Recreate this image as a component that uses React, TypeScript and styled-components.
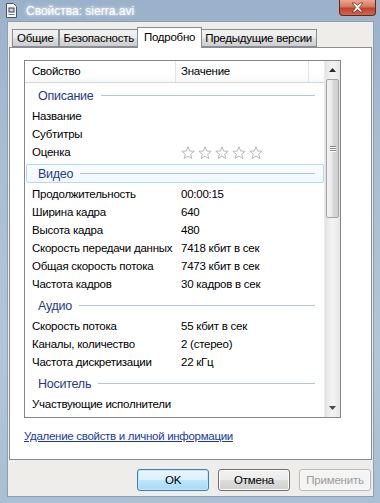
import styled, { createGlobalStyle } from "styled-components";

const GlobalStyle = createGlobalStyle`
  html, body {
    margin: 0;
    padding: 0;
    background: #ffffff;
  }
  body {
    font-family: "Liberation Sans", Arial, sans-serif;
    font-size: 11.5px;
    letter-spacing: -0.25px;
    color: #000;
  }
`;

const Window = styled.div`
  width: 380px;
  height: 503px;
  display: flex;
  flex-direction: column;
  overflow: hidden;
  background: linear-gradient(180deg, #9bb1ca 0%, #a9bdd2 30%, #b3c5d8 70%, #aabfd4 100%);
`;

const TitleBar = styled.div`
  height: 21px;
  flex: none;
  display: flex;
  align-items: center;
  padding-left: 6px;
  gap: 9px;
`;

const TitleText = styled.span`
  color: #ffffff;
  font-size: 12px;
  letter-spacing: 0;
  text-shadow: 0 0 3px rgba(255, 255, 255, 0.9), 0 0 6px rgba(210, 225, 240, 0.9);
`;

const CloseButton = styled.div`
  margin-left: auto;
  margin-right: 4px;
  align-self: flex-start;
  width: 37px;
  height: 16px;
  box-sizing: border-box;
  border: 1px solid #5b2a22;
  border-top: none;
  border-radius: 0 0 4px 4px;
  background: linear-gradient(180deg, #e9a792 0%, #d8765f 45%, #c2412a 55%, #d4664a 100%);
  display: flex;
  align-items: center;
  justify-content: center;
`;

const Body = styled.div`
  flex: 1;
  display: flex;
  padding: 0 6px 6px 7px;
  min-height: 0;
`;

const Client = styled.div`
  flex: 1;
  display: flex;
  flex-direction: column;
  background: #eeede9;
  border: 1px solid #8d9fb3;
  padding: 5px 1px 0 1px;
`;

const TabStrip = styled.div`
  height: 20px;
  display: flex;
  align-items: flex-end;
  padding-left: 3px;
  position: relative;
  z-index: 1;
`;

const Tab = styled.div<{ $active?: boolean }>`
  box-sizing: border-box;
  height: ${(p) => (p.$active ? "21px" : "18px")};
  margin: ${(p) => (p.$active ? "0 -2px -1px -2px" : "0")};
  padding: ${(p) => (p.$active ? "0 6px 2px" : "0 4px")};
  display: flex;
  align-items: center;
  border: 1px solid #898c95;
  border-bottom: ${(p) => (p.$active ? "none" : "1px solid #898c95")};
  background: ${(p) =>
    p.$active ? "#ffffff" : "linear-gradient(180deg, #f2f2f2 0%, #ebebeb 50%, #dddddd 51%, #cfcfcf 100%)"};
  position: relative;
  z-index: ${(p) => (p.$active ? 2 : 0)};
  & + & {
    border-left: ${(p) => (p.$active ? "1px solid #898c95" : "none")};
  }
`;

const Panel = styled.div`
  height: 413px;
  box-sizing: border-box;
  background: #ffffff;
  border: 1px solid #898c95;
  padding: 12px 14px 0 14px;
`;

const ListBox = styled.div`
  width: 317px;
  height: 358px;
  box-sizing: border-box;
  border: 1px solid #828790;
  display: grid;
  grid-template-columns: 1fr 16px;
  overflow: hidden;
`;

const ListContent = styled.div`
  display: flex;
  flex-direction: column;
  overflow: hidden;
`;

const Header = styled.div`
  height: 22px;
  flex: none;
  box-sizing: border-box;
  display: grid;
  grid-template-columns: 150px 133px 1fr;
  border-bottom: 1px solid #d5d5d5;
  background: linear-gradient(180deg, #ffffff 0%, #ffffff 60%, #f7f8f9 100%);
`;

const HeaderCell = styled.div<{ $first?: boolean }>`
  display: flex;
  align-items: center;
  padding-left: ${(p) => (p.$first ? "7px" : "5px")};
  border-left: ${(p) => (p.$first ? "none" : "1px solid #e3e4e6")};
  padding-bottom: 1px;
`;

const Group = styled.div`
  height: 24px;
  flex: none;
  box-sizing: border-box;
  padding: 3px 0 2px 1px;
`;

const GroupBox = styled.div<{ $hot?: boolean }>`
  height: 19px;
  box-sizing: border-box;
  display: flex;
  align-items: center;
  padding: 0 8px 0 11px;
  border: 1px solid ${(p) => (p.$hot ? "#b9d7f5" : "transparent")};
  border-radius: 2px;
  background: ${(p) => (p.$hot ? "linear-gradient(180deg, #fafdff 0%, #f1f8fe 100%)" : "transparent")};
`;

const GroupTitle = styled.span`
  color: #1e3a8a;
  font-size: 12.5px;
`;

const GroupLine = styled.div`
  flex: 1;
  height: 1px;
  margin-left: 7px;
  background: #b4c5d8;
`;

const Row = styled.div`
  height: 18px;
  flex: none;
  display: grid;
  grid-template-columns: 150px 1fr;
  align-items: center;
  white-space: nowrap;
`;

const NameCell = styled.span`
  padding-left: 7px;
`;

const ValueCell = styled.span`
  padding-left: 6px;
  display: flex;
  align-items: center;
`;

const Scrollbar = styled.div`
  display: flex;
  flex-direction: column;
  background: linear-gradient(90deg, #e3e3e3 0%, #f2f2f2 40%, #f2f2f2 60%, #e6e6e6 100%);
  border-left: 1px solid #eaeaea;
`;

const ScrollArrow = styled.div`
  height: 18px;
  flex: none;
  display: flex;
  align-items: center;
  justify-content: center;
`;

const ScrollTrack = styled.div`
  flex: 1;
  padding: 0 1px;
`;

const Thumb = styled.div`
  height: 139px;
  box-sizing: border-box;
  border: 1px solid #a4a4a4;
  border-radius: 2px;
  background: linear-gradient(90deg, #f3f3f3 0%, #e8e8e8 45%, #d9d9d9 55%, #cfcfcf 100%);
  display: flex;
  flex-direction: column;
  align-items: center;
  justify-content: center;
  gap: 1px;
`;

const GripLine = styled.div`
  width: 6px;
  height: 1px;
  background: #8a8a8a;
  box-shadow: 0 1px 0 #ffffff;
`;

const LinkText = styled.a`
  display: block;
  margin-top: 10px;
  line-height: 16px;
  color: #1a3a9e;
  text-decoration: underline;
  letter-spacing: -0.3px;
  cursor: pointer;
`;

const ButtonRow = styled.div`
  display: flex;
  justify-content: flex-end;
  gap: 9px;
  margin-top: 9px;
  padding-right: 1px;
`;

const Button = styled.button<{ $variant?: "default" | "normal" | "disabled" }>`
  width: 72px;
  height: 22px;
  box-sizing: border-box;
  font-family: "Liberation Sans", Arial, sans-serif;
  font-size: 11.5px;
  letter-spacing: -0.2px;
  padding: 0;
  border-radius: 3px;
  border: 1px solid
    ${(p) => (p.$variant === "default" ? "#3c7fb1" : p.$variant === "disabled" ? "#b5b8bb" : "#707070")};
  color: ${(p) => (p.$variant === "disabled" ? "#9c9c9c" : "#000")};
  background: ${(p) =>
    p.$variant === "disabled"
      ? "#f4f4f4"
      : p.$variant === "default"
      ? "linear-gradient(180deg, #eaf6fd 0%, #d9f0fc 50%, #bee6fd 51%, #a7d9f5 100%)"
      : "linear-gradient(180deg, #f2f2f2 0%, #ebebeb 50%, #dddddd 51%, #cfcfcf 100%)"};
  box-shadow: ${(p) => (p.$variant === "default" ? "inset 0 0 0 1px #c6e7f8" : "inset 0 0 0 1px #fbfbfb")};
`;

const StarIcon = () => (
  <svg width="14" height="14" viewBox="0 0 14 14">
    <polygon
      points="7,0.8 8.65,5.03 13.18,5.29 9.66,8.17 10.82,12.56 7,10.1 3.18,12.56 4.34,8.17 0.82,5.29 5.35,5.03"
      fill="#ffffff"
      stroke="#b9b9b9"
      strokeWidth="1"
      strokeLinejoin="round"
    />
  </svg>
);

const Stars = styled.span`
  display: flex;
  gap: 3px;
  margin-top: 1px;
`;

const FileIcon = () => (
  <svg width="11" height="15" viewBox="0 0 11 15">
    <path d="M0.5 0.5 H7.5 L10.5 3.5 V14.5 H0.5 Z" fill="#f4f6f8" stroke="#4a5564" />
    <rect x="2.5" y="4.5" width="6" height="5" fill="#3a4452" />
    <rect x="3.5" y="5.5" width="4" height="3" fill="#c9d3de" />
    <rect x="2.5" y="11" width="6" height="1" fill="#7b8796" />
  </svg>
);

const CloseGlyph = () => (
  <svg width="13" height="11" viewBox="0 0 13 11">
    <path
      d="M1 1 H4 L6.5 3.6 L9 1 H12 L8.2 5.5 L12 10 H9 L6.5 7.4 L4 10 H1 L4.8 5.5 Z"
      fill="#ffffff"
      stroke="#6b2a1f"
      strokeWidth="0.8"
      strokeLinejoin="round"
    />
  </svg>
);

const UpArrow = () => (
  <svg width="7" height="4" viewBox="0 0 7 4">
    <polygon points="3.5,0 7,4 0,4" fill="#2b2b2b" />
  </svg>
);

const DownArrow = () => (
  <svg width="7" height="4" viewBox="0 0 7 4">
    <polygon points="0,0 7,0 3.5,4" fill="#4a4a4a" />
  </svg>
);

type Item = { name: string; value?: string; stars?: boolean };
type Section = { title: string; hot?: boolean; items: Item[] };

const sections: Section[] = [
  {
    title: "Описание",
    items: [{ name: "Название" }, { name: "Субтитры" }, { name: "Оценка", stars: true }],
  },
  {
    title: "Видео",
    hot: true,
    items: [
      { name: "Продолжительность", value: "00:00:15" },
      { name: "Ширина кадра", value: "640" },
      { name: "Высота кадра", value: "480" },
      { name: "Скорость передачи данных", value: "7418 кбит в сек" },
      { name: "Общая скорость потока", value: "7473 кбит в сек" },
      { name: "Частота кадров", value: "30 кадров в сек" },
    ],
  },
  {
    title: "Аудио",
    items: [
      { name: "Скорость потока", value: "55 кбит в сек" },
      { name: "Каналы, количество", value: "2 (стерео)" },
      { name: "Частота дискретизации", value: "22 кГц" },
    ],
  },
  {
    title: "Носитель",
    items: [{ name: "Участвующие исполнители" }],
  },
];

const tabs = ["Общие", "Безопасность", "Подробно", "Предыдущие версии"];

export default function App() {
  return (
    <>
      <GlobalStyle />
      <Window>
        <TitleBar>
          <FileIcon />
          <TitleText>Свойства: sierra.avi</TitleText>
          <CloseButton>
            <CloseGlyph />
          </CloseButton>
        </TitleBar>
        <Body>
          <Client>
            <TabStrip>
              {tabs.map((t) => (
                <Tab key={t} $active={t === "Подробно"}>
                  {t}
                </Tab>
              ))}
            </TabStrip>
            <Panel>
              <ListBox>
                <ListContent>
                  <Header>
                    <HeaderCell $first>Свойство</HeaderCell>
                    <HeaderCell>Значение</HeaderCell>
                    <HeaderCell />
                  </Header>
                  {sections.map((s) => (
                    <div key={s.title}>
                      <Group>
                        <GroupBox $hot={s.hot}>
                          <GroupTitle>{s.title}</GroupTitle>
                          <GroupLine />
                        </GroupBox>
                      </Group>
                      {s.items.map((it) => (
                        <Row key={it.name}>
                          <NameCell>{it.name}</NameCell>
                          <ValueCell>
                            {it.stars ? (
                              <Stars>
                                {[0, 1, 2, 3, 4].map((i) => (
                                  <StarIcon key={i} />
                                ))}
                              </Stars>
                            ) : (
                              it.value
                            )}
                          </ValueCell>
                        </Row>
                      ))}
                    </div>
                  ))}
                </ListContent>
                <Scrollbar>
                  <ScrollArrow>
                    <UpArrow />
                  </ScrollArrow>
                  <ScrollTrack>
                    <Thumb>
                      <GripLine />
                      <GripLine />
                      <GripLine />
                    </Thumb>
                  </ScrollTrack>
                  <ScrollArrow>
                    <DownArrow />
                  </ScrollArrow>
                </Scrollbar>
              </ListBox>
              <LinkText>Удаление свойств и личной информации</LinkText>
            </Panel>
            <ButtonRow>
              <Button $variant="default">OK</Button>
              <Button>Отмена</Button>
              <Button $variant="disabled">Применить</Button>
            </ButtonRow>
          </Client>
        </Body>
      </Window>
    </>
  );
}
